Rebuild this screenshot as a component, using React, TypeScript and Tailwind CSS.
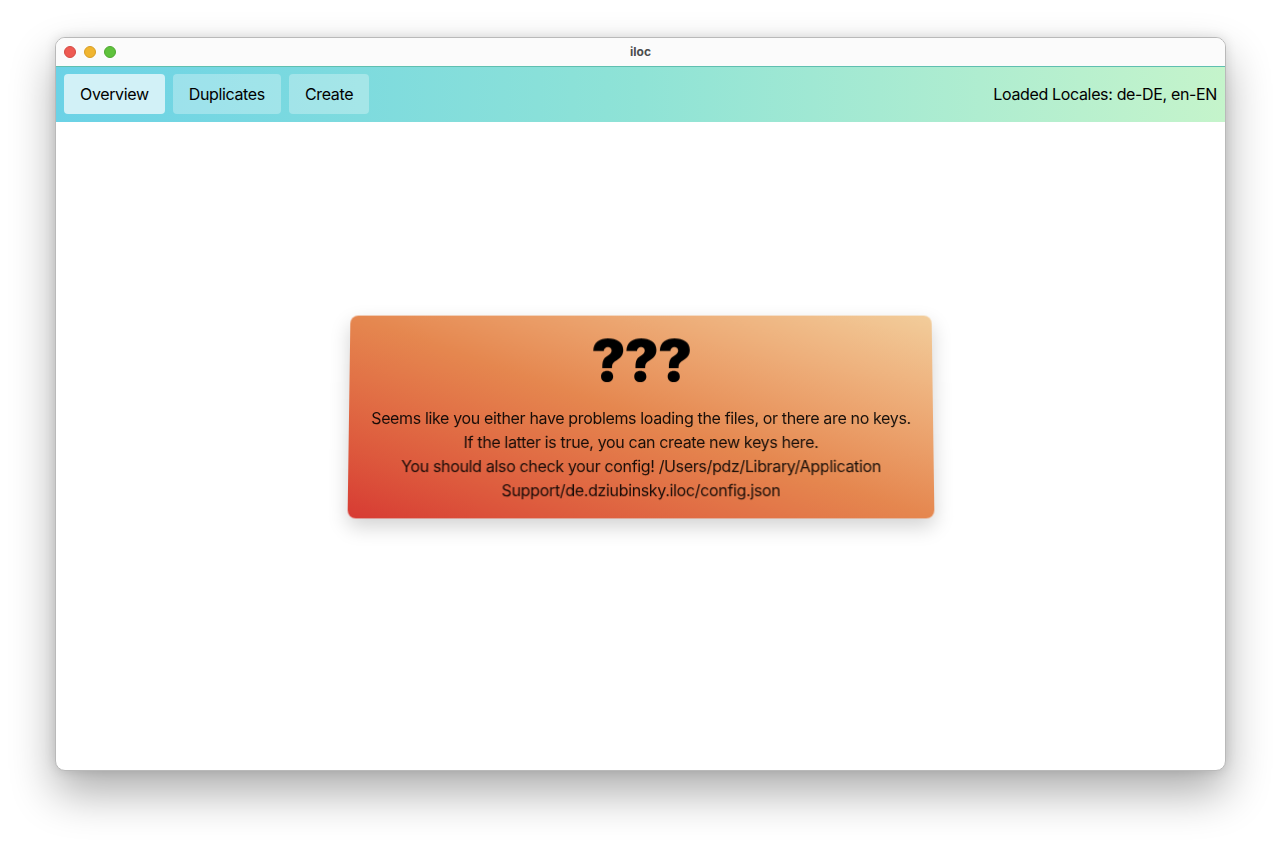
import React from 'react';

const tabs = ['Overview', 'Duplicates', 'Create'];

export default function App() {
  const active = 'Overview';

  return (
    <div className="w-[1281px] h-[845px] bg-white pt-[37px] pl-[55px] font-['Inter','Liberation_Sans',sans-serif] tracking-[-0.35px]">
      <div className="w-[1171px] h-[734px] rounded-[10px] border border-[#b9b9b9] bg-white overflow-hidden flex flex-col shadow-[0_22px_45px_rgba(0,0,0,0.32),0_0_12px_rgba(0,0,0,0.12)]">
        {/* title bar */}
        <div className="relative h-[29px] bg-[#fbfbfb] border-b border-[#5fbfb0] flex items-center justify-center">
          <div className="absolute left-[8px] top-[8px] flex gap-[8px]">
            <span className="w-[12px] h-[12px] rounded-full bg-[#ee5a52] border border-[#d44a43]" />
            <span className="w-[12px] h-[12px] rounded-full bg-[#f0b530] border border-[#d79e25]" />
            <span className="w-[12px] h-[12px] rounded-full bg-[#5fc23c] border border-[#4fa831]" />
          </div>
          <span className="text-[12px] font-bold text-[#4d4d4d] tracking-normal">iloc</span>
        </div>

        {/* nav */}
        <div className="h-[55px] flex items-center justify-between px-[8px] bg-gradient-to-r from-[#6bd2e6] via-[#8fe3d6] to-[#c5f4cb]">
          <div className="flex gap-[8px] -mt-[2px]">
            {tabs.map((t) => (
              <button
                key={t}
                className={
                  t === active
                    ? 'h-[40px] px-[16px] rounded-[4px] bg-[#d2f1f7] text-[16px] text-black'
                    : 'h-[40px] px-[16px] rounded-[4px] bg-white/30 text-[16px] text-black'
                }
              >
                {t}
              </button>
            ))}
          </div>
          <span className="text-[16px] text-black -mt-[2px]">Loaded Locales: de-DE, en-EN</span>
        </div>

        {/* body */}
        <div className="flex-1 flex justify-center pt-[193px]">
          <div className="w-[584px] h-[203px] rounded-[8px] bg-gradient-to-tr from-[#d73a33] via-[#e5874f] to-[#f2cd9b] shadow-[0_8px_20px_rgba(0,0,0,0.18)] [transform:perspective(900px)_rotateX(2.5deg)] flex flex-col items-center pt-[16px] px-[18px] text-center">
            <div className="text-[58px] leading-[58px] font-black text-black tracking-[-1.5px]">???</div>
            <p className="mt-[17px] text-[16px] leading-[24px] text-black/90">
              Seems like you either have problems loading the files, or there are no keys.
              <br />
              If the latter is true, you can create new keys here.
              <br />
              You should also check your config! /Users/pdz/Library/Application Support/de.dziubinsky.iloc/config.json
            </p>
          </div>
        </div>
      </div>
    </div>
  );
}
